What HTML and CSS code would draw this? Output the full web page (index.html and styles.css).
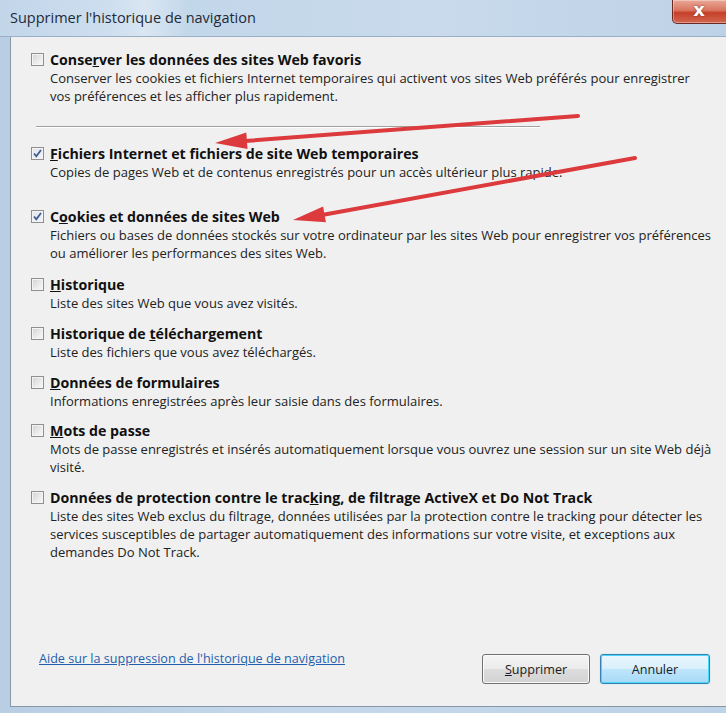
FILE: index.html
```html
<!DOCTYPE html>
<html lang="fr">
<head>
<meta charset="utf-8">
<title>Supprimer l'historique de navigation</title>
<link rel="stylesheet" href="styles.css">
</head>
<body>
<div class="window">
  <div class="titlebar">
    <span class="title">Supprimer l'historique de navigation</span>
    <div class="close"><span>x</span></div>
  </div>
  <div class="frame">
    <div class="client">
      <div class="options">
        <div class="opt opt-first">
          <span class="cb"></span>
          <div class="txt">
            <div class="label">Conse<u>r</u>ver les données des sites Web favoris</div>
            <div class="desc">Conserver les cookies et fichiers Internet temporaires qui activent vos sites Web préférés pour enregistrer vos préférences et les afficher plus rapidement.</div>
          </div>
        </div>
        <div class="sep"></div>
        <div class="opt opt-second">
          <span class="cb checked"><svg viewBox="0 0 11 11" width="11" height="11"><path d="M2 5.5 L4.3 8.3 L9 2" fill="none" stroke="#3f5d93" stroke-width="1.8"/></svg></span>
          <div class="txt">
            <div class="label"><u>F</u>ichiers Internet et fichiers de site Web temporaires</div>
            <div class="desc">Copies de pages Web et de contenus enregistrés pour un accès ultérieur plus rapide.</div>
          </div>
        </div>
        <div class="opt opt-third">
          <span class="cb checked"><svg viewBox="0 0 11 11" width="11" height="11"><path d="M2 5.5 L4.3 8.3 L9 2" fill="none" stroke="#3f5d93" stroke-width="1.8"/></svg></span>
          <div class="txt">
            <div class="label">C<u>o</u>okies et données de sites Web</div>
            <div class="desc">Fichiers ou bases de données stockés sur votre ordinateur par les sites Web pour enregistrer vos préférences ou améliorer les performances des sites Web.</div>
          </div>
        </div>
        <div class="opt">
          <span class="cb"></span>
          <div class="txt">
            <div class="label"><u>H</u>istorique</div>
            <div class="desc">Liste des sites Web que vous avez visités.</div>
          </div>
        </div>
        <div class="opt">
          <span class="cb"></span>
          <div class="txt">
            <div class="label">Historique de <u>t</u>éléchargement</div>
            <div class="desc">Liste des fichiers que vous avez téléchargés.</div>
          </div>
        </div>
        <div class="opt">
          <span class="cb"></span>
          <div class="txt">
            <div class="label"><u>D</u>onnées de formulaires</div>
            <div class="desc">Informations enregistrées après leur saisie dans des formulaires.</div>
          </div>
        </div>
        <div class="opt">
          <span class="cb"></span>
          <div class="txt">
            <div class="label"><u>M</u>ots de passe</div>
            <div class="desc">Mots de passe enregistrés et insérés automatiquement lorsque vous ouvrez une session sur un site Web déjà visité.</div>
          </div>
        </div>
        <div class="opt">
          <span class="cb"></span>
          <div class="txt">
            <div class="label">Données de protection contre le trac<u>k</u>ing, de filtrage ActiveX et Do Not Track</div>
            <div class="desc">Liste des sites Web exclus du filtrage, données utilisées par la protection contre le tracking pour détecter les services susceptibles de partager automatiquement des informations sur votre visite, et exceptions aux demandes Do Not Track.</div>
          </div>
        </div>
      </div>
      <div class="footer">
        <a class="help" href="#">Aide sur la suppression de l'historique de navigation</a>
        <div class="buttons">
          <button class="btn"><u>S</u>upprimer</button>
          <button class="btn btn-default">Annuler</button>
        </div>
      </div>
    </div>
  </div>
  <svg class="arrows" width="726" height="713" viewBox="0 0 726 713">
    <line x1="578" y1="116" x2="245" y2="141" stroke="#dc3a3d" stroke-width="4" stroke-linecap="round"/>
    <polygon points="215,143 247.5,149 246.3,132.6" fill="#dc3a3d"/>
    <line x1="635" y1="158" x2="322" y2="215" stroke="#dc3a3d" stroke-width="4" stroke-linecap="round"/>
    <polygon points="293,220 325.9,222.2 323.1,206.4" fill="#dc3a3d"/>
  </svg>
</div>
</body>
</html>
```
FILE: styles.css
```css
* { box-sizing: border-box; }
html, body { margin: 0; padding: 0; }
body {
  width: 726px;
  height: 713px;
  overflow: hidden;
  font-family: "Open Sans", "Noto Sans", sans-serif;
  color: #1b1b1b;
}
.window {
  position: relative;
  width: 726px;
  height: 713px;
  display: flex;
  flex-direction: column;
  background: linear-gradient(90deg, #b9cee3 0%, #c5d8eb 40%, #bfd3e8 100%);
}
.titlebar {
  height: 37px;
  flex: none;
  display: flex;
  align-items: center;
  padding-left: 10px;
  background: linear-gradient(90deg, #c2d6ea 0%, #cddeef 15%, #d9e6f2 20%, #c3d7ea 26%, #c8daec 60%, #bed2e7 100%);
  border-bottom: 1px solid #9bb0c6;
}
.title {
  font-size: 14.5px;
  color: #1e2a38;
  padding-bottom: 1px;
}
.close {
  position: absolute;
  top: 0;
  right: -4px;
  width: 58px;
  height: 24px;
  border: 1px solid #6c2a22;
  border-top: none;
  border-radius: 0 0 0 5px;
  background: linear-gradient(180deg, #e9a897 0%, #d9755f 45%, #c5402a 55%, #d3664f 100%);
  box-shadow: inset 0 0 0 1px rgba(255,255,255,0.35);
  display: flex;
  align-items: center;
  justify-content: center;
}
.close span {
  color: #fff;
  font-family: "DejaVu Sans", sans-serif;
  font-weight: bold;
  font-size: 18px;
  line-height: 1;
  margin-top: -4px;
  margin-right: 4px;
  text-shadow: 0 0 2px #7a2a1e;
}
.frame {
  flex: 1;
  padding: 0 0 6px 10px;
}
.client {
  height: 100%;
  background: #f0f0f0;
  border: 1px solid #8797a8;
  border-right: none;
  border-top: none;
  display: flex;
  flex-direction: column;
  padding: 13px 0 22px 20px;
  font-size: 13px;
}
.options {
  display: flex;
  flex-direction: column;
}
.opt {
  display: flex;
  align-items: flex-start;
  margin-top: 11px;
}
.opt-first { margin-top: 0; }
.opt-second { margin-top: 16px; }
.opt-third { margin-top: 26px; }
.opt-third + .opt { margin-top: 12px; }
.cb {
  flex: none;
  width: 13px;
  height: 13px;
  margin-top: 3px;
  margin-right: 6px;
  border: 1px solid #8f8f8f;
  background: linear-gradient(135deg, #d2d2d2 0%, #ececec 60%, #f8f8f8 100%);
  box-shadow: inset 0 0 0 1px #f4f4f4;
  display: flex;
  align-items: center;
  justify-content: center;
}
.cb.checked {
  background: linear-gradient(135deg, #dfe5ee 0%, #f2f4f8 100%);
}
.cb svg { display: block; }
.txt { flex: 1; padding-right: 13px; }
.label {
  font-weight: bold;
  font-size: 14.2px;
  line-height: 19px;
  color: #111;
}
.desc {
  line-height: 17.8px;
  margin-top: 1px;
  color: #222;
}
.sep {
  margin: 20px 0 0 5px;
  width: 504px;
  height: 2px;
  border-top: 1px solid #a0a0a0;
  border-bottom: 1px solid #ffffff;
}
.footer {
  margin-top: auto;
  display: flex;
  align-items: flex-end;
  justify-content: space-between;
  padding-left: 8px;
  padding-right: 16px;
}
.help {
  color: #1f5fae;
  text-decoration: underline;
  font-size: 12.6px;
  margin-bottom: 17px;
}
.buttons {
  display: flex;
  gap: 10px;
}
.btn {
  font-family: "Open Sans", "Noto Sans", sans-serif;
  font-size: 12.6px;
  color: #1b1b1b;
  width: 108px;
  height: 30px;
  border: 1px solid #707070;
  border-radius: 3px;
  background: linear-gradient(180deg, #f4f4f4 0%, #ebebeb 49%, #dddddd 51%, #d2d2d2 100%);
  box-shadow: inset 0 0 0 1px #fbfbfb;
  padding: 0;
}
.btn-default {
  width: 110px;
  border-color: #3c7fb1;
  background: linear-gradient(180deg, #eaf6fd 0%, #d9f0fc 49%, #bee6fd 51%, #a7d9f5 100%);
  box-shadow: inset 0 0 0 1px #48d8fb, 0 0 1px #48d8fb;
}
.arrows {
  position: absolute;
  top: 0;
  left: 0;
  pointer-events: none;
}
```
